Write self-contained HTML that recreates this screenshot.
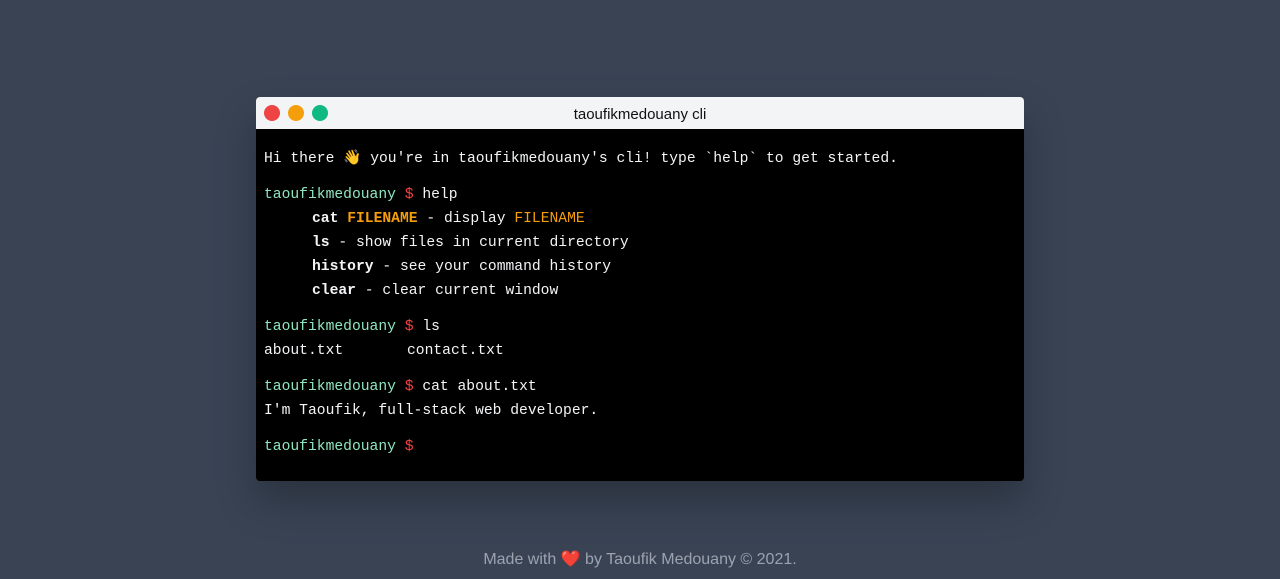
<!DOCTYPE html>
<html><head><meta charset="utf-8"><style>
html,body{margin:0;padding:0;width:1280px;height:579px;background:#394354;overflow:hidden}
.win{position:absolute;left:256px;top:97px;width:768px;height:384px;background:#000;border-radius:4px;overflow:hidden;box-shadow:0 20px 40px rgba(0,0,0,.25)}
.bar{height:32px;background:#f3f4f6;position:relative;font-family:"Liberation Sans",sans-serif;font-size:15px;color:#111;text-align:center;line-height:35px}
.dot{position:absolute;top:8px;width:16px;height:16px;border-radius:50%}
.t{position:absolute;left:8px;top:1px;font-family:"Liberation Mono",monospace;font-size:14.67px;color:#f3f4f6;white-space:pre}
.l{position:absolute;left:0;line-height:24px;height:24px}
.p{color:#8ee6c0}.d{color:#ef4444}.b{font-weight:bold}.o{color:#f59e0b}
.foot{position:absolute;top:549px;left:0;width:1280px;text-align:center;font-family:"Liberation Sans",sans-serif;font-size:16px;color:#9ca3af}
</style></head><body>
<div class="win">
<div class="bar"><span class="dot" style="left:8px;background:#ef4444"></span><span class="dot" style="left:32px;background:#f59e0b"></span><span class="dot" style="left:56px;background:#10b981"></span>taoufikmedouany cli</div>
<div class="t">
<div class="l" style="top:49px">Hi there 👋 you're in taoufikmedouany's cli! type `help` to get started.</div>
<div class="l" style="top:85px"><span class="p">taoufikmedouany</span> <span class="d">$</span> help</div>
<div class="l" style="top:109px;left:48px"><span class="b">cat</span> <span class="b o">FILENAME</span> - display <span class="o">FILENAME</span></div>
<div class="l" style="top:133px;left:48px"><span class="b">ls</span> - show files in current directory</div>
<div class="l" style="top:157px;left:48px"><span class="b">history</span> - see your command history</div>
<div class="l" style="top:181px;left:48px"><span class="b">clear</span> - clear current window</div>
<div class="l" style="top:217px"><span class="p">taoufikmedouany</span> <span class="d">$</span> ls</div>
<div class="l" style="top:241px">about.txt</div>
<div class="l" style="top:241px;left:143px">contact.txt</div>
<div class="l" style="top:277px"><span class="p">taoufikmedouany</span> <span class="d">$</span> cat about.txt</div>
<div class="l" style="top:301px">I'm Taoufik, full-stack web developer.</div>
<div class="l" style="top:337px"><span class="p">taoufikmedouany</span> <span class="d">$</span></div>
</div>
</div>
<div class="foot">Made with <span style="color:#ef4444">❤️</span> by Taoufik Medouany © 2021.</div>
</body></html>
